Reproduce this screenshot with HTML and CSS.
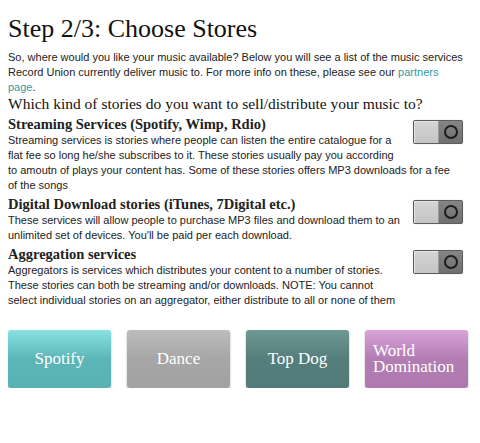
FILE: index.html
```html
<!DOCTYPE html>
<html>
<head>
<meta charset="utf-8">
<link rel="stylesheet" href="styles.css">
</head>
<body>
<h1 class="title">Step 2/3: Choose Stores</h1>
<p class="intro">So, where would you like your music available? Below you will see a list of the music services Record Union currently deliver music to. For more info on these, please see our <a class="link" href="#">partners page</a>.</p>
<h2 class="question">Which kind of stories do you want to sell/distribute your music to?</h2>

<div class="service">
  <div class="toggle"><span class="knob"></span><span class="track"><svg width="16" height="16" viewBox="0 0 16 16"><circle cx="8" cy="8" r="6" fill="none" stroke="#1c1c1c" stroke-width="2"/></svg></span></div>
  <h3 class="service-title">Streaming Services (Spotify, Wimp, Rdio)</h3>
  <p class="desc">Streaming services is stories where people can listen the entire catalogue for a flat fee so long he/she subscribes to it. These stories usually pay you according to amoutn of plays your content has. Some of these stories offers MP3 downloads for a fee of the songs</p>
</div>

<div class="service">
  <div class="toggle"><span class="knob"></span><span class="track"><svg width="16" height="16" viewBox="0 0 16 16"><circle cx="8" cy="8" r="6" fill="none" stroke="#1c1c1c" stroke-width="2"/></svg></span></div>
  <h3 class="service-title">Digital Download stories (iTunes, 7Digital etc.)</h3>
  <p class="desc">These services will allow people to purchase MP3 files and download them to an unlimited set of devices. You'll be paid per each download.</p>
</div>

<div class="service">
  <div class="toggle"><span class="knob"></span><span class="track"><svg width="16" height="16" viewBox="0 0 16 16"><circle cx="8" cy="8" r="6" fill="none" stroke="#1c1c1c" stroke-width="2"/></svg></span></div>
  <h3 class="service-title">Aggregation services</h3>
  <p class="desc">Aggregators is services which distributes your content to a number of stories. These stories can both be streaming and/or downloads. NOTE: You cannot select individual stories on an aggregator, either distribute to all or none of them</p>
</div>

<div class="buttons">
  <div class="btn btn-spotify"><span>Spotify</span></div>
  <div class="btn btn-dance"><span>Dance</span></div>
  <div class="btn btn-topdog"><span>Top Dog</span></div>
  <div class="btn btn-world"><span>World Domination</span></div>
</div>
</body>
</html>
```

FILE: styles.css
```css
body {
  margin: 8px;
  background: #fff;
  color: #222;
  font-family: "Liberation Sans", Arial, sans-serif;
  font-size: 11px;
}
.title {
  font-family: "Liberation Serif", serif;
  font-weight: normal;
  font-size: 26px;
  line-height: 30px;
  margin: 6px 0 0 0;
  color: #111;
}
.intro {
  margin: 6px 0 0 0;
  padding-right: 6px;
  line-height: 15px;
}
.link {
  color: #3399a0;
  text-decoration: none;
}
.question {
  font-family: "Liberation Serif", serif;
  font-weight: normal;
  font-size: 15.5px;
  line-height: 18px;
  margin: 0;
  color: #111;
}
.service {
  margin-top: 3px;
}
.service-title {
  font-family: "Liberation Serif", serif;
  font-size: 14.5px;
  font-weight: bold;
  line-height: 16px;
  margin: 0;
  color: #222;
}
.desc {
  margin: 1px 0 0 0;
  padding-right: 12px;
  line-height: 15px;
}
.toggle {
  float: right;
  display: flex;
  width: 48px;
  height: 22px;
  margin: 4px 9px 8px 10px;
  border: 1px solid #5c5c5c;
  border-radius: 2px;
  background: #7a7a7a;
  box-shadow: 0 0 1px rgba(0,0,0,0.3);
}
.knob {
  width: 24px;
  height: 22px;
  background: linear-gradient(#d4d4d4, #c4c4c4);
  border-right: 1px solid #9a9a9a;
  box-shadow: inset 1px 1px 0 #e4e4e4;
}
.track {
  flex: 1;
  display: flex;
  align-items: center;
  justify-content: center;
  background: linear-gradient(#858585, #6f6f6f);
}
.buttons {
  clear: both;
  display: flex;
  gap: 16px;
  margin-top: 22px;
}
.btn {
  width: 103px;
  height: 58px;
  box-sizing: border-box;
  border-radius: 3px;
  display: flex;
  align-items: center;
  justify-content: center;
  color: #fff;
  font-family: "Liberation Serif", serif;
  font-size: 17px;
  line-height: 16px;
  box-shadow: 0 1px 2px rgba(0,0,0,0.35);
  padding: 0 8px;
}
.btn span {
  text-align: left;
}
.btn-spotify {
  background: linear-gradient(#8ae2e2, #5cb6b7 50%, #58b1b2);
}
.btn-dance {
  background: linear-gradient(#bdbdbd, #a6a6a6 50%, #a2a2a2);
}
.btn-topdog {
  background: linear-gradient(#6d9894, #547e7b 50%, #517b78);
}
.btn-world {
  background: linear-gradient(#d9a3da, #b17db2 50%, #ad79ae);
}
```
